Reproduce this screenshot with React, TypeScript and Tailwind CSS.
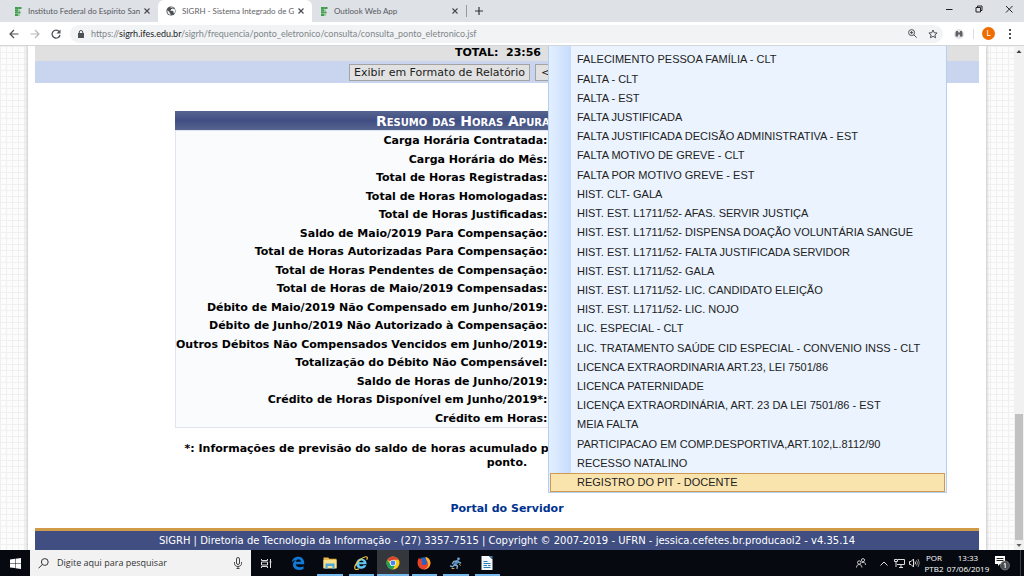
import React, { useState } from 'react';

const menuItems = [
  'FALECIMENTO PESSOA FAMÍLIA - CLT',
  'FALTA - CLT',
  'FALTA - EST',
  'FALTA JUSTIFICADA',
  'FALTA JUSTIFICADA DECISÃO ADMINISTRATIVA - EST',
  'FALTA MOTIVO DE GREVE - CLT',
  'FALTA POR MOTIVO GREVE - EST',
  'HIST. CLT- GALA',
  'HIST. EST. L1711/52- AFAS. SERVIR JUSTIÇA',
  'HIST. EST. L1711/52- DISPENSA DOAÇÃO VOLUNTÁRIA SANGUE',
  'HIST. EST. L1711/52- FALTA JUSTIFICADA SERVIDOR',
  'HIST. EST. L1711/52- GALA',
  'HIST. EST. L1711/52- LIC. CANDIDATO ELEIÇÃO',
  'HIST. EST. L1711/52- LIC. NOJO',
  'LIC. ESPECIAL - CLT',
  'LIC. TRATAMENTO SAÚDE CID ESPECIAL - CONVENIO INSS - CLT',
  'LICENCA EXTRAORDINARIA ART.23, LEI 7501/86',
  'LICENCA PATERNIDADE',
  'LICENÇA EXTRAORDINÁRIA, ART. 23 DA LEI 7501/86 - EST',
  'MEIA FALTA',
  'PARTICIPACAO EM COMP.DESPORTIVA,ART.102,L.8112/90',
  'RECESSO NATALINO',
  'REGISTRO DO PIT - DOCENTE',
];

const summaryRows = [
  'Carga Horária Contratada:',
  'Carga Horária do Mês:',
  'Total de Horas Registradas:',
  'Total de Horas Homologadas:',
  'Total de Horas Justificadas:',
  'Saldo de Maio/2019 Para Compensação:',
  'Total de Horas Autorizadas Para Compensação:',
  'Total de Horas Pendentes de Compensação:',
  'Total de Horas de Maio/2019 Compensadas:',
  'Débito de Maio/2019 Não Compensado em Junho/2019:',
  'Débito de Junho/2019 Não Autorizado à Compensação:',
  'Outros Débitos Não Compensados Vencidos em Junho/2019:',
  'Totalização do Débito Não Compensável:',
  'Saldo de Horas de Junho/2019:',
  'Crédito de Horas Disponível em Junho/2019*:',
  'Crédito em Horas:',
];

const IfesIcon = () => (
  <svg viewBox="0 0 8 9" className="w-2 h-[9px] shrink-0">
    <path fill="#3f9d4d" d="M1 0h3v2H1zM4.200 0H7.500v2H4.200zM1 2.300h3v2H1zM1 4.600h3v2H1zM4.200 4.600h2.300v2H4.200zM1 6.900h3V9H1z" />
    <path fill="#8cc795" d="M4.200 2.300h1.600v2H4.200zM4.200 6.900h1.600v2H4.200z" />
  </svg>
);

const GlobeIcon = () => (
  <svg viewBox="0 0 10 10" className="w-[10px] h-[10px] shrink-0">
    <circle cx="5" cy="5" r="4.6" fill="#4d5156" />
    <path fill="#fff" d="M1.3 4.2 3.5 6v1l1 1v.9C2.500 8.600 1.200 7 1.300 4.200zM4 1.400c1.200-.4 2.200-.2 3 .3L6.500 3H5v1L4 4.800h2.600l1 1v1.400l.6.300c1-1.300 1.100-3 .4-4.400l-.9.200L7 2.200z" />
  </svg>
);

const CloseIcon = () => (
  <svg viewBox="0 0 6 6" className="w-[6px] h-[6px]" fill="none" stroke="#45494d" strokeWidth="1.1">
    <path d="M.5.5l5 5M5.500.5l-5 5" />
  </svg>
);

type TabProps = { title: string; icon: React.ReactNode; active?: boolean };

const Tab: React.FC<TabProps> = ({ title, icon, active }) => (
  <div className={`flex items-center w-[154px] pl-2 pr-2 ${active ? 'bg-white rounded-t-md' : ''}`}>
    {icon}
    <span className={`ml-[6px] flex-1 overflow-hidden whitespace-nowrap text-[8px] ${active ? 'text-[#5f6368]' : 'text-[#55595e]'}`}>
      {title}
    </span>
    <button aria-label="Fechar guia" className="ml-1">
      <CloseIcon />
    </button>
  </div>
);

const Browser: React.FC = () => (
  <header className="shrink-0 font-[Lato,'Open_Sans',sans-serif]">
    <div className="flex h-[22px] bg-[#dee1e6] pl-1">
      <Tab title="Instituto Federal do Espírito Sant" icon={<span className="ml-[2px]"><IfesIcon /></span>} />
      <Tab title="SIGRH - Sistema Integrado de Ge" icon={<GlobeIcon />} active />
      <Tab title="Outlook Web App" icon={<IfesIcon />} />
      <div className="flex items-center">
        <div className="w-px h-3 bg-[#96999e]" />
        <button aria-label="Nova guia" className="ml-[8px]">
          <svg viewBox="0 0 8 8" className="w-2 h-2" stroke="#33363a" strokeWidth="1.2"><path d="M4 0v8M0 4h8" /></svg>
        </button>
      </div>
      <div className="ml-auto flex items-center h-[18px] gap-[22px] pr-[11px]">
        <button aria-label="Minimizar">
          <svg viewBox="0 0 8 8" className="w-2 h-2" stroke="#222"><path d="M1 4.500h6.500" /></svg>
        </button>
        <button aria-label="Restaurar">
          <svg viewBox="0 0 8 8" className="w-2 h-2" fill="none" stroke="#222"><path d="M1 2.500h4.500V7H1zM2.500 2.500V1H7v4.500H5.500" /></svg>
        </button>
        <button aria-label="Fechar">
          <svg viewBox="0 0 8 8" className="w-2 h-2" stroke="#222"><path d="M1 1l6.500 6.500M7.500 1 1 7.500" /></svg>
        </button>
      </div>
    </div>

    <div className="flex items-center h-[23px] bg-white pl-[9px] pr-[13px]">
      <div className="flex items-center gap-[11px]">
        <button aria-label="Voltar">
          <svg viewBox="0 0 10 10" className="w-[10px] h-[10px]" fill="none" stroke="#4d5156" strokeWidth="1.200"><path d="M9.500 5h-8M5 1 1 5l4 4" /></svg>
        </button>
        <button aria-label="Avançar">
          <svg viewBox="0 0 10 10" className="w-[10px] h-[10px]" fill="none" stroke="#b4b7ba" strokeWidth="1.200"><path d="M.5 5h8M5 1l4 4-4 4" /></svg>
        </button>
        <button aria-label="Recarregar">
          <svg viewBox="0 0 10 10" className="w-[10px] h-[10px]"><path d="M8.300 2.700A4 4 0 1 0 9 6" fill="none" stroke="#4d5156" strokeWidth="1.300" /><path d="M9.500.5v4h-4z" fill="#4d5156" /></svg>
        </button>
      </div>
      <div className="flex flex-1 items-center h-[18px] ml-[9px] pl-2 pr-[5px] rounded-full bg-[#f1f3f4]">
        <svg viewBox="0 0 6 8" className="w-[6px] h-2"><path d="M0 3h6v5H0z" fill="#4d5156" /><path d="M1.300 3.500V2a1.700 1.500 0 0 1 3.400 0v1.500" fill="none" stroke="#4d5156" /></svg>
        <div className="ml-[7px] flex-1 whitespace-nowrap text-[9px] text-[#80868b]">
          https://<span className="text-[#202124]">sigrh.ifes.edu.br</span>/sigrh/frequencia/ponto_eletronico/consulta/consulta_ponto_eletronico.jsf
        </div>
        <button aria-label="Zoom" className="mr-[11px]">
          <svg viewBox="0 0 9 9" className="w-[9px] h-[9px]" fill="none" stroke="#4d5156"><circle cx="3.600" cy="3.600" r="3" /><path d="M6 6l2.700 2.700M2 3.600h3.200M3.600 2v3.200" /></svg>
        </button>
        <button aria-label="Favoritar">
          <svg viewBox="0 0 10 10" className="w-[10px] h-[10px]" fill="none" stroke="#4d5156"><path d="M5 1l1.200 2.700 2.900.3-2.200 1.900.7 2.900L5 7.300 2.400 8.800l.7-2.900L.9 4l2.900-.3z" /></svg>
        </button>
      </div>
      <button aria-label="Extensão" className="ml-[11px]">
        <svg viewBox="0 0 10 10" className="w-[10px] h-[10px]"><circle cx="5" cy="5" r="5" fill="#e4e4e4" /><path d="M1.500 7.500V4l.7-2h1.600l.5 1.500h1.400L6.200 2h1.600l.7 2v3.500H5.900v-2H4.100v2z" fill="#5d6064" /></svg>
      </button>
      <div className="w-px h-[10px] mr-[8px] ml-[9px] bg-[#dadce0]" />
      <button className="w-[13px] h-[13px] rounded-full bg-[#ef6c00] text-[8px] leading-[13px] text-white">L</button>
      <button aria-label="Menu" className="ml-[14px]">
        <svg viewBox="0 0 2 10" className="w-[2px] h-[10px]" fill="#4d5156"><path d="M0 0h2v2H0zM0 4h2v2H0zM0 8h2v2H0z" /></svg>
      </button>
    </div>
    <div className="h-px bg-[#d3d5d8]" />
  </header>
);

const StatusMenu: React.FC = () => {
  const [current, setCurrent] = useState('REGISTRO DO PIT - DOCENTE');

  return (
    <div className="absolute left-[548px] top-0 w-[399px] h-[447px] border-x border-b border-[#b5cff0] bg-[linear-gradient(90deg,#e3efff_0,#c6dcfd_22px,#eaf3fe_22px)] pt-1 px-px grid grid-cols-1 auto-rows-fr font-['Liberation_Sans',Arial,sans-serif] text-[11px] text-[#222]">
      {menuItems.map((item) => (
        <button
          key={item}
          onClick={() => setCurrent(item)}
          className={`min-h-0 pl-[26px] flex items-center text-left whitespace-nowrap border ${
            item === current ? 'bg-[#fae4ae] border-[#d09a55]' : 'border-transparent'
          }`}
        >
          {item}
        </button>
      ))}
    </div>
  );
};

const Page: React.FC = () => (
  <main className="flex-1 min-w-0 relative overflow-hidden bg-[#fcfcfc] bg-[linear-gradient(#f0f0f0_1px,transparent_1px),linear-gradient(90deg,#f0f0f0_1px,transparent_1px)] bg-size-[6px_6px] font-['DejaVu_Sans',Verdana,sans-serif] text-[11px] text-black">
    <div className="mx-7 px-[7px] min-h-full bg-white shadow-[0_0_3px_1px_#c4c4c4]">
      <div className="h-[15px] leading-[13px] bg-[#e0e0e0] pr-[438px] text-right font-bold whitespace-pre">TOTAL:  23:56</div>
      <div className="h-[22px] bg-[#c9d4ee] flex items-center justify-center gap-[5px]">
        <button className="h-[17px] w-[181px] leading-[15px] border border-[#a3a3a3] bg-[#e1e1e1] text-[#222] whitespace-nowrap">
          Exibir em Formato de Relatório
        </button>
        <button className="h-[17px] w-[130px] leading-[15px] pl-[5px] text-left border border-[#a3a3a3] bg-[#e1e1e1] text-[#222] whitespace-nowrap">
          {'<< Voltar'}
        </button>
      </div>

      <table className="mx-auto mt-7 w-[664px] max-w-full h-[298px] border border-[#dfe5f0] bg-[#f9fbfd] font-bold">
        <caption className="h-[19px] leading-[20px] bg-[linear-gradient(#56648f,#404e84_50%,#56648f)] text-[14px] text-white [font-variant:small-caps]">
          Resumo das Horas Apuradas em Junho
        </caption>
        <tbody>
          {summaryRows.map((label) => (
            <tr key={label}>
              <th scope="row" className="w-[56%] p-0 pt-[2px] text-right leading-[16px] whitespace-nowrap">{label}</th>
              <td className="p-0" />
            </tr>
          ))}
        </tbody>
      </table>

      <p className="mt-[14px] text-center font-bold leading-[14px]">
        *: Informações de previsão do saldo de horas acumulado pelo servidor no mês, conforme a apuração do
        <br />
        ponto.
      </p>
      <p className="mt-8 text-center font-bold leading-[14px]">
        <a href="#portal" className="text-[#003390]">Portal do Servidor</a>
      </p>
      <footer className="mt-3 h-[23px] border-t-[3px] border-[#d09a48] bg-[#404e82] text-center text-[10px] leading-[20px] text-white whitespace-nowrap">
        SIGRH | Diretoria de Tecnologia da Informação - (27) 3357-7515 | Copyright © 2007-2019 - UFRN - jessica.cefetes.br.producaoi2 - v4.35.14
      </footer>
    </div>
    <StatusMenu />
  </main>
);

const Scrollbar: React.FC = () => (
  <div className="flex flex-col items-center w-[10px] shrink-0 bg-[#f1f1f1]">
    <svg viewBox="0 0 10 10" className="w-[10px] h-[10px]"><path d="M2.500 7 5 4l2.500 3z" fill="#404040" /></svg>
    <div className="flex-1" />
    <div className="w-2 h-[126px] bg-[#c1c1c1]" />
    <svg viewBox="0 0 10 10" className="w-[10px] h-[10px]"><path d="M2.500 4 5 7l2.500-3z" fill="#606060" /></svg>
  </div>
);

const EdgeLogo = () => (
  <svg viewBox="0 0 14 14" className="w-[14px] h-[14px]">
    <path fill="#0f7ad8" d="M.8 6.300C1.300 2.800 3.900.7 7.200.7c3.800 0 6 2.700 6 6v1.500H4.800c.1 2.200 2.100 3 4 3 1.500 0 2.700-.4 3.700-1v2.700c-1.200.7-2.700 1-4.300 1-3.600 0-6.200-2-6.200-5.200C2 6.400 3.400 4.700 5.300 3.900 3.400 4 1.800 4.900.8 6.300zM4.900 5.700h4.900c0-1.500-.8-2.400-2.300-2.400-1.400 0-2.300.9-2.600 2.400z" />
  </svg>
);

const FolderLogo = () => (
  <svg viewBox="0 0 14 14" className="w-[14px] h-[14px]">
    <path fill="#e9b94d" d="M.5 1.500h4.800l1 1.200h7.200V12H.5z" />
    <path fill="#fbe08b" d="M.5 4h13v8.500H.5z" />
    <path fill="#4aa8dd" d="M2.500 7.500h9V13H9.400v-3H4.600v3H2.500z" />
  </svg>
);

const ExplorerLogo = () => (
  <svg viewBox="0 0 14 14" className="w-[14px] h-[14px]">
    <path fill="#62c9f5" d="M2 7.500a5.300 5.300 0 1 1 10.600.7H5.100c.3 1.400 1.100 2 2.300 2 1 0 1.500-.4 1.900-1h3.100c-.8 2.200-2.600 3.600-5 3.600C4.200 12.800 2 10.700 2 7.500zM5.100 6.300h4.500c-.2-1.200-.9-1.900-2.200-1.900s-2 .7-2.300 1.900z" />
    <path fill="none" stroke="#f1c644" strokeWidth="1.200" d="M1.300 13.200c-1.800-2 1-6.800 5.300-10C9.500 1 12.600.1 13.200 1.300c.3.600 0 1.500-.5 2.500M1.300 13.200c.8.700 2.300.2 3.500-.5" />
  </svg>
);

const ChromeLogo = () => (
  <svg viewBox="0 0 14 14" className="w-[14px] h-[14px]">
    <circle cx="7" cy="7" r="6.500" fill="#fbc916" />
    <path fill="#dc4437" d="M7 7 1.400 3.700A6.500 6.500 0 0 1 12.600 3.800H7z" />
    <path fill="#1da05e" d="M1.400 3.700A6.500 6.500 0 0 0 6.500 13.500L9.700 8.600 7 7 4.200 8.500z" />
    <circle cx="7" cy="7" r="3.100" fill="#fff" />
    <circle cx="7" cy="7" r="2.400" fill="#4285f4" />
  </svg>
);

const FirefoxLogo = () => (
  <svg viewBox="0 0 14 14" className="w-[14px] h-[14px]">
    <circle cx="7" cy="7.200" r="6" fill="#1e65c9" />
    <path fill="#e7422b" d="M.5 6.800C.6 4 1.500 2.800 2.300 1.500l.6 1.700c1-.5 2-.3 2.700.2C4.700 4 4.300 4.900 4.500 5.600l1.700.4-1.500 1.200c0 1.800 2.300 2.400 3.900 1.300 1.500-1.100 1.700-3 .7-4.600l-.8-2.300c3 .4 5 2.700 5 5.600A6.500 6.500 0 0 1 .5 6.800z" />
    <path fill="#ffb02e" d="M8.500.7c3.300.8 5.500 4 4.800 7.300-.6 3-3.300 5.400-6.500 5.300 3-1 4.500-2.700 4.300-5.300C11 5.500 9.800 4.800 9.200 3.400z" />
  </svg>
);

const RunnerLogo = () => (
  <svg viewBox="0 0 14 14" className="w-[14px] h-[14px]" fill="none" strokeLinecap="round">
    <circle cx="9.500" cy="2.800" r="1.400" fill="#6fa6d8" />
    <path stroke="#4c86bd" strokeWidth="3" d="M8.500 5.500 6 8.500" />
    <path stroke="#7da9cf" strokeWidth="1.400" d="M8 5 5 5.500 3.500 7.500M9.500 6l2 1M6 9l2.500 1-.5 2.300M5.500 9 3.500 10.800 1.500 10" />
    <path stroke="#d7a54c" strokeWidth="1" d="M10.500 8.500l1 .8M3 12.500h2" />
  </svg>
);

const WriterLogo = () => (
  <svg viewBox="0 0 14 14" className="w-[14px] h-[14px]">
    <path fill="#f5f9fc" d="M1.500 0h7.500L12.500 3.500V14h-11z" />
    <path fill="#2f86bd" d="M9.500 0h3V3z" />
    <path stroke="#287fb8" strokeWidth="1" d="M3.500 5.500h4M3.500 7.500h7M3.500 9.500H7M3.500 11.500h7M8 9.500h2.500" />
  </svg>
);

const TaskViewIcon = () => (
  <svg viewBox="0 0 11 11" className="w-[11px] h-[11px]" fill="none" stroke="#e0e0e0">
    <path d="M.5 1v1.500h6V1M.5 10V8.500h6V10M.5 4h6v3h-6zM9.500 1v9M8.500 4h2" />
  </svg>
);

const apps = [
  { name: 'Visão de tarefas', icon: <TaskViewIcon />, state: '' },
  { name: 'Edge', icon: <EdgeLogo />, state: '' },
  { name: 'Explorador de Arquivos', icon: <FolderLogo />, state: 'open' },
  { name: 'Internet Explorer', icon: <ExplorerLogo />, state: 'open' },
  { name: 'Chrome', icon: <ChromeLogo />, state: 'active' },
  { name: 'Firefox', icon: <FirefoxLogo />, state: 'open' },
  { name: 'Cliente', icon: <RunnerLogo />, state: 'open' },
  { name: 'Writer', icon: <WriterLogo />, state: 'open' },
];

const Taskbar: React.FC = () => (
  <div className="flex h-[26px] shrink-0 bg-[#060a10] text-white font-['Open_Sans',sans-serif]">
    <button aria-label="Iniciar" className="w-[30px] flex items-center justify-center">
      <svg viewBox="0 0 11 11" className="w-[11px] h-[11px]" fill="#fff"><path d="M0 1.500 5 .8v4.400H0zM5.500.7 11 0v5.200H5.500zM0 5.700h5v4.400l-5-.7zM5.500 5.700H11V11l-5.500-.8z" /></svg>
    </button>
    <label className="flex items-center w-[221px] bg-[#f2f2f2] pl-2 pr-[9px]">
      <svg viewBox="0 0 11 11" className="w-[11px] h-[11px] shrink-0" fill="none" stroke="#333"><circle cx="6.800" cy="4" r="3.400" /><path d="M4.300 6.500.5 10.300" /></svg>
      <input
        aria-label="Pesquisar"
        placeholder="Digite aqui para pesquisar"
        className="ml-2 flex-1 min-w-0 bg-transparent text-[9px] placeholder:text-[#333] outline-none"
      />
      <svg viewBox="0 0 8 12" className="w-2 h-3 shrink-0" fill="none" stroke="#444"><rect x="2.500" y=".5" width="3" height="7" rx="1.500" /><path d="M.5 5v1.500c0 4 7 4 7 0V5M4 9.500v2M2.500 11.500h3" /></svg>
    </label>
    <div className="grid grid-cols-8 w-[252px]">
      {apps.map((app) => (
        <button
          key={app.name}
          aria-label={app.name}
          className={`flex items-center justify-center ${app.state === 'active' ? 'bg-[#34383c]' : ''} ${
            app.state ? 'border-b-2 border-[#76b9ed] pt-[2px]' : ''
          } ${app.state === 'open' ? 'mx-[3px]' : ''}`}
        >
          {app.icon}
        </button>
      ))}
    </div>
    <div className="ml-auto flex items-center">
      <svg viewBox="0 0 10 10" className="w-[10px] h-[10px]" fill="none" stroke="#ddd" strokeWidth=".9"><circle cx="3.200" cy="4.500" r="1.700" /><circle cx="7" cy="2.200" r="1.600" /><path d="M.5 9.500c0-4 5.400-4 5.400 0M5.800 4.800c2-1.200 3.700 0 3.700 2.200" /></svg>
      <svg viewBox="0 0 8 5" className="w-2 h-[5px] ml-[14px]" fill="none" stroke="#ddd"><path d="M.5 4.500 4 1l3.500 3.500" /></svg>
      <svg viewBox="0 0 11 10" className="w-[11px] h-[10px] ml-[6px]" fill="none" stroke="#ddd"><path d="M4 1.500h6.500v5H3M5 9.500h4M7 6.500v3M.5 1.500h3v2h-3zM2 3.500v5.500" /></svg>
      <svg viewBox="0 0 11 10" className="w-[11px] h-[10px] ml-1" fill="none" stroke="#ddd"><path d="M.5 3.500H2L4.500 1v8L2 6.500H.5zM6 3.500q1 1.500 0 3" /><path stroke="#888" d="M7.500 2.300q2 2.700 0 5.400M9 1q2.600 4 0 8" /></svg>
      <div className="w-6 ml-[2px] text-center text-[8px] leading-[11px]">POR<br />PTB2</div>
      <div className="w-11 text-center text-[8px] leading-[11px] whitespace-nowrap">13:33<br />07/06/2019</div>
      <svg viewBox="0 0 16 16" className="w-4 h-4 ml-1"><path fill="#fff" d="M1 1h10v8H6l-2 2V9H1z" /><path stroke="#222" d="M2.500 3.500h7M2.500 5.500h7" /><circle cx="11" cy="10.500" r="4.500" fill="#4a4d50" stroke="#999" strokeWidth=".6" /><path stroke="#fff" fill="none" d="M9.800 9.300 11.200 8.300v4.700" /></svg>
      <div className="w-px h-[26px] ml-[10px] mr-[3px] bg-[#3a3d41]" />
    </div>
  </div>
);

const App: React.FC = () => (
  <div className="flex flex-col h-screen overflow-hidden bg-white">
    <Browser />
    <div className="flex flex-1 min-h-0">
      <Page />
      <Scrollbar />
    </div>
    <Taskbar />
  </div>
);

export default App;
